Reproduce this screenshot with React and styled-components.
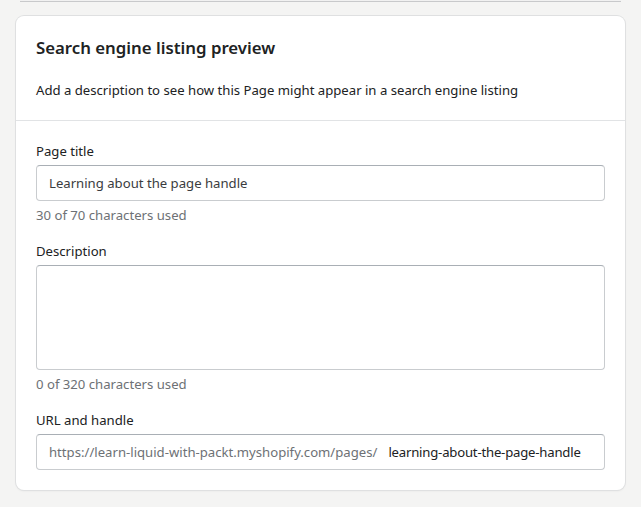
import React from 'react';
import styled, { createGlobalStyle } from 'styled-components';

const GlobalStyle = createGlobalStyle`
    html, body {
        margin: 0;
        padding: 0;
        background: #f4f4f3;
    }
    body {
        font-family: "Noto Sans", "Open Sans", sans-serif;
        font-size: 13px;
        color: #202223;
        -webkit-font-smoothing: antialiased;
    }
`

const Page = styled.div`
    padding: 0 16px 16px;
`

const PrevCardEdge = styled.div`
    height: 2px;
    margin: 0 4px;
    background: #f1f1f1;
    border-bottom: 1px solid #c8c9cb;
    box-sizing: border-box;
`

const Card = styled.div`
    margin-top: 14px;
    background: #ffffff;
    border-radius: 8px;
    box-shadow: 0 0 0 1px #dfe0e1, 0 1px 2px rgba(63, 63, 68, 0.1);
`

const Header = styled.div`
    padding: 20px 20px 0;
`

const Title = styled.h2`
    margin: 0;
    font-size: 16.8px;
    font-weight: 600;
    line-height: 24px;
    color: #202223;
`

const Section = styled.div`
    padding: 20px;
    border-top: ${p => (p.divided ? '1px solid #e1e3e5' : 'none')};
`

const Text = styled.p`
    margin: 0;
    font-size: 13.15px;
    line-height: 20px;
    color: #202223;
`

const Field = styled.div`
    & + & {
        margin-top: 16px;
    }
`

const Label = styled.label`
    display: block;
    margin-bottom: 4px;
    font-size: 13.15px;
    line-height: 20px;
    color: #202223;
`

const InputBox = styled.div`
    display: flex;
    align-items: ${p => (p.multiline ? 'flex-start' : 'center')};
    height: ${p => (p.multiline ? '105px' : '36px')};
    padding: 0 12px;
    box-sizing: border-box;
    border: 1px solid #c9cccf;
    border-top-color: #a9afb5;
    border-radius: 4px;
    background: #fff;
    font-size: 13.15px;
    line-height: 20px;
    white-space: nowrap;
    overflow: hidden;
`

const Prefix = styled.span`
    color: #6d7175;
    margin-right: 11px;
`

const Value = styled.span`
    color: ${p => (p.strong ? '#202223' : '#3a3c3e')};
    letter-spacing: ${p => (p.strong ? '-0.2px' : '0')};
`

const Help = styled.div`
    margin-top: 4px;
    font-size: 13.15px;
    line-height: 20px;
    color: #6d7175;
`

const App = () => {
    return (
        <Page>
            <GlobalStyle />
            <PrevCardEdge />
            <Card>
                <Header>
                    <Title>Search engine listing preview</Title>
                </Header>
                <Section>
                    <Text>Add a description to see how this Page might appear in a search engine listing</Text>
                </Section>
                <Section divided>
                    <Field>
                        <Label>Page title</Label>
                        <InputBox>
                            <Value>Learning about the page handle</Value>
                        </InputBox>
                        <Help>30 of 70 characters used</Help>
                    </Field>
                    <Field>
                        <Label>Description</Label>
                        <InputBox multiline />
                        <Help>0 of 320 characters used</Help>
                    </Field>
                    <Field>
                        <Label>URL and handle</Label>
                        <InputBox>
                            <Prefix>https://learn-liquid-with-packt.myshopify.com/pages/</Prefix>
                            <Value strong>learning-about-the-page-handle</Value>
                        </InputBox>
                    </Field>
                </Section>
            </Card>
        </Page>
    );
}

export default App;
